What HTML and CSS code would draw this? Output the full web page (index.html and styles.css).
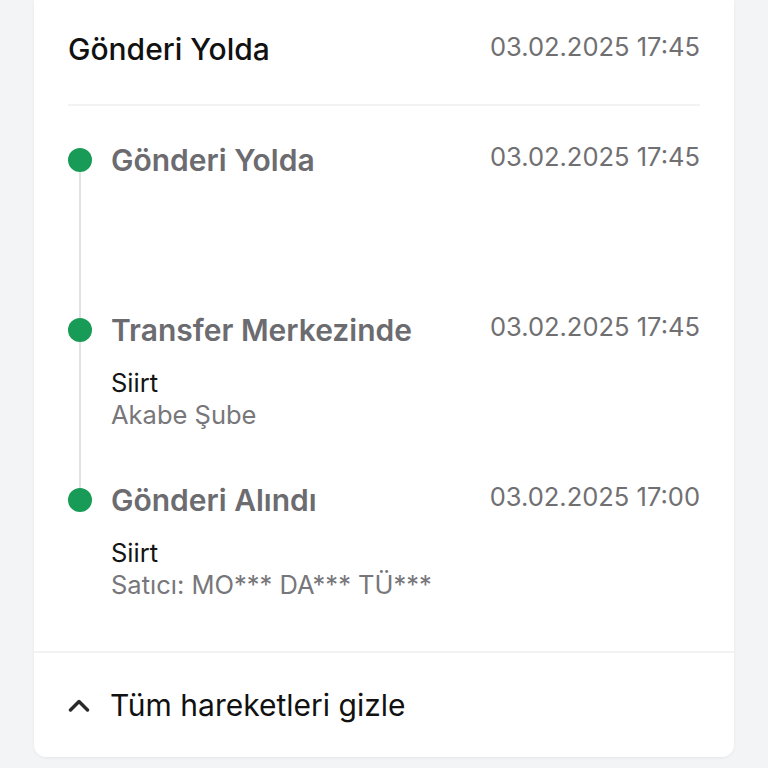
FILE: index.html
```html
<!DOCTYPE html>
<html lang="tr">
<head>
<meta charset="utf-8">
<link rel="stylesheet" href="styles.css">
</head>
<body>
<div class="card">
  <div class="header">
    <div class="h-title">Gönderi Yolda</div>
    <div class="date">03.02.2025 17:45</div>
  </div>
  <div class="timeline">
    <div class="item">
      <span class="dot"></span>
      <div class="content">
        <div class="row">
          <div class="t-title">Gönderi Yolda</div>
          <div class="date">03.02.2025 17:45</div>
        </div>
      </div>
    </div>
    <div class="item">
      <span class="dot"></span>
      <div class="content">
        <div class="row">
          <div class="t-title">Transfer Merkezinde</div>
          <div class="date">03.02.2025 17:45</div>
        </div>
        <div class="sub">
          <div class="city">Siirt</div>
          <div class="branch">Akabe Şube</div>
        </div>
      </div>
    </div>
    <div class="item last">
      <span class="dot"></span>
      <div class="content">
        <div class="row">
          <div class="t-title">Gönderi Alındı</div>
          <div class="date">03.02.2025 17:00</div>
        </div>
        <div class="sub">
          <div class="city">Siirt</div>
          <div class="branch">Satıcı: MO*** DA*** TÜ***</div>
        </div>
      </div>
    </div>
  </div>
  <div class="footer">
    <svg class="chev" width="22" height="14" viewBox="0 0 22 14"><path d="M2.5 12 L11 3.5 L19.5 12" fill="none" stroke="#2a2a2a" stroke-width="3.4" stroke-linecap="round" stroke-linejoin="round"/></svg>
    <span class="toggle">Tüm hareketleri gizle</span>
  </div>
</div>
</body>
</html>
```
FILE: styles.css
```css
* { box-sizing: border-box; }
html, body { margin: 0; padding: 0; }
body {
  background: #f3f4f6;
  font-family: Inter, "Noto Sans", sans-serif;
  width: 768px;
  height: 768px;
  overflow: hidden;
}
.card {
  margin: 0 34px;
  width: 700px;
  background: #fff;
  border-radius: 0 0 12px 12px;
  box-shadow: 0 1px 3px rgba(0,0,0,0.06);
}
.header {
  margin: 0 34px;
  padding: 30px 0 39px;
  display: flex;
  justify-content: space-between;
  align-items: center;
  border-bottom: 2px solid #f3f3f4;
  height: 106px;
}
.h-title {
  font-size: 30px;
  line-height: 36px;
  font-weight: 500;
  color: #111;
  margin-top: 3px;
}
.date {
  font-size: 25.5px;
  line-height: 36px;
  color: #707073;
}
.header .date { margin-top: -2px; }
.timeline {
  padding: 36px 34px 50px;
}
.item {
  position: relative;
  display: flex;
  gap: 19px;
  height: 170px;
}
.item.last { height: auto; }
.item::before {
  content: "";
  position: absolute;
  left: 11px;
  top: 18px;
  height: 170px;
  width: 2px;
  background: #e2e2e4;
}
.item.last::before { display: none; }
.dot {
  flex: none;
  position: relative;
  width: 24px;
  height: 24px;
  margin-top: 6px;
  border-radius: 50%;
  background: #179b56;
}
.content { flex: 1; }
.row {
  display: flex;
  justify-content: space-between;
  align-items: flex-start;
}
.row .date { line-height: 30px; }
.t-title {
  font-size: 30px;
  line-height: 36px;
  font-weight: 600;
  color: #6b6b70;
}
.sub { margin-top: 19px; }
.city {
  font-size: 25.5px;
  line-height: 32px;
  color: #141414;
}
.branch {
  font-size: 25.5px;
  line-height: 32px;
  color: #77777b;
}
.footer {
  border-top: 2px solid #f3f3f4;
  height: 106px;
  padding: 0 34px;
  display: flex;
  align-items: center;
  gap: 20px;
}
.chev { flex: none; }
.toggle {
  font-size: 30px;
  line-height: 36px;
  color: #111;
}
```
